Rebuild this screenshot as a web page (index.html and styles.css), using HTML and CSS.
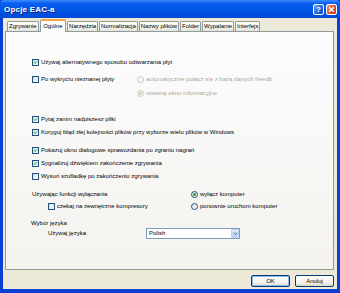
FILE: index.html
```html
<!DOCTYPE html>
<html>
<head>
  <title>Opcje EAC-a</title>
  <meta charset="UTF-8" />
  <link rel="stylesheet" href="styles.css">
</head>
<body>
  <div class="window">
    <div class="titlebar">
      <span class="title">Opcje EAC-a</span>
      <div class="caption-btns">
        <span class="cap help">?</span>
        <span class="cap close"><svg viewBox="0 0 9 9" width="7" height="7"><path d="M1.5 1.5l6 6M7.5 1.5l-6 6" stroke="#fff" stroke-width="1.7"/></svg></span>
      </div>
    </div>

    <div class="client">
      <div class="tabs">
        <span class="tab">Zgrywanie</span>
        <span class="tab active">Ogólne</span>
        <span class="tab">Narzędzia</span>
        <span class="tab">Normalizacja</span>
        <span class="tab">Nazwy plików</span>
        <span class="tab">Folder</span>
        <span class="tab">Wypalanie</span>
        <span class="tab">Interfejs</span>
      </div>

      <div class="panel">
        <div class="group">
          <div class="opt"><span class="box"><svg viewBox="0 0 7 7"><path d="M1.4 3.3l1.5 1.6 2.7-3.1"/></svg></span>Używaj alternatywnego sposobu odtwarzania płyt</div>
        </div>

        <div class="group freedb">
          <div class="split split-freedb">
            <div class="opt"><span class="box empty"></span>Po wykryciu nieznanej płyty</div>
            <div class="opt off"><span class="radio"></span>automatycznie połącz się z bazą danych freedb</div>
          </div>
          <div class="split split-freedb">
            <div></div>
            <div class="opt off"><span class="radio on"></span>otwieraj okno informacyjne</div>
          </div>
        </div>

        <div class="group files">
          <div class="opt"><span class="box"><svg viewBox="0 0 7 7"><path d="M1.4 3.3l1.5 1.6 2.7-3.1"/></svg></span>Pytaj zanim nadpiszesz pliki</div>
          <div class="opt"><span class="box"><svg viewBox="0 0 7 7"><path d="M1.4 3.3l1.5 1.6 2.7-3.1"/></svg></span>Koryguj błąd złej kolejności plików przy wyborze wielu plików w Windows</div>
        </div>

        <div class="group rip">
          <div class="opt"><span class="box"><svg viewBox="0 0 7 7"><path d="M1.4 3.3l1.5 1.6 2.7-3.1"/></svg></span>Pokazuj okno dialogowe sprawozdania po zgraniu nagrań</div>
          <div class="opt"><span class="box"><svg viewBox="0 0 7 7"><path d="M1.4 3.3l1.5 1.6 2.7-3.1"/></svg></span>Sygnalizuj dźwiękiem zakończenie zgrywania</div>
          <div class="opt"><span class="box empty"></span>Wysuń szufladkę po zakończeniu zgrywania</div>
        </div>

        <div class="group power">
          <div class="split split-power">
            <div class="opt">Używając funkcji wyłączania</div>
            <div class="opt"><span class="radio on"></span>wyłącz komputer</div>
          </div>
          <div class="split split-power">
            <div class="opt indent"><span class="box empty"></span>czekaj na zewnętrzne kompresory</div>
            <div class="opt"><span class="radio"></span>ponownie uruchom komputer</div>
          </div>
        </div>

        <div class="group lang">
          <div class="opt lang-title">Wybór języka</div>
          <div class="lang-row">
            <span class="lang-label">Używaj języka</span>
            <div class="combo">
              <span>Polish</span>
              <span class="combo-btn"><svg viewBox="0 0 7 7" width="5" height="5"><path d="M1 2.2l2.5 2.4 2.5-2.4"/></svg></span>
            </div>
          </div>
        </div>
      </div>

      <div class="actions">
        <button class="btn default">OK</button>
        <button class="btn">Anuluj</button>
      </div>
    </div>
  </div>
</body>
</html>
```

FILE: styles.css
```css
body {
  margin: 0;
  font-family: "Liberation Sans", Arial, sans-serif;
  font-size: 6px;
  color: #000;
}
.window {
  width: 340px;
  height: 293px;
  display: flex;
  flex-direction: column;
  background: #0a3fd6;
}
.titlebar {
  height: 18px;
  flex: none;
  display: flex;
  align-items: center;
  justify-content: space-between;
  padding: 0 3px 0 4px;
  background: linear-gradient(#3d8dfb, #0a5ff0 18%, #0056e6 55%, #0049d6);
  border-radius: 4px 4px 0 0;
}
.title {
  color: #fff;
  font-weight: bold;
  font-size: 8px;
  letter-spacing: 0.2px;
  text-shadow: 1px 1px 0 #0a1e8c;
}
.caption-btns {
  display: flex;
  gap: 2px;
}
.cap {
  width: 11px;
  height: 11px;
  box-sizing: border-box;
  border: 1px solid #fff;
  border-radius: 2px;
  display: flex;
  align-items: center;
  justify-content: center;
  color: #fff;
  font-weight: bold;
  font-size: 8px;
}
.help {
  background: linear-gradient(135deg, #6fa4ff, #2260e0 60%, #1a4fc8);
}
.close {
  background: linear-gradient(135deg, #f09a7d, #e0522e 55%, #c8391a);
}
.client {
  flex: 1;
  margin: 0 3px 4px;
  padding: 1px 3px 0 2px;
  background: #ece9d8;
  display: flex;
  flex-direction: column;
}
.tabs {
  height: 12px;
  flex: none;
  display: flex;
  align-items: flex-end;
  padding-left: 2px;
  position: relative;
  z-index: 1;
}
.tab {
  height: 10px;
  box-sizing: border-box;
  border: 1px solid #919b9c;
  border-bottom: none;
  border-radius: 2px 2px 0 0;
  padding: 0 1px;
  margin-right: 1px;
  line-height: 9px;
  background: linear-gradient(#ffffff, #f3f3ef 60%, #e3e1d8);
  white-space: nowrap;
}
.tab.active {
  height: 13px;
  margin-bottom: -1px;
  padding: 1px 2.5px 0;
  border-top: 2px solid #f2a640;
  background: #fcfcfe;
}
.panel {
  flex: 1;
  border: 1px solid #919b9c;
  background: linear-gradient(#fcfcfe, #f4f3ee);
  padding: 25px 0 0 26px;
  display: flex;
  flex-direction: column;
}
.group {
  display: flex;
  flex-direction: column;
}
.freedb {
  margin-top: 7px;
  gap: 4px;
}
.files {
  margin-top: 16px;
  gap: 3px;
}
.rip {
  margin-top: 8px;
  gap: 3px;
}
.power {
  margin-top: 8px;
  gap: 2px;
}
.lang {
  margin-top: 7px;
}
.opt {
  height: 10px;
  display: flex;
  align-items: center;
  white-space: nowrap;
}
.opt.off {
  color: #aca899;
}
.indent {
  padding-left: 16px;
}
.split {
  display: grid;
}
.split-freedb {
  grid-template-columns: 105px 1fr;
}
.split-power {
  grid-template-columns: 159px 1fr;
}
.box {
  width: 7px;
  height: 7px;
  box-sizing: border-box;
  flex: none;
  margin-right: 2px;
  border: 1px solid #1c5180;
  background: linear-gradient(135deg, #dcdcd7, #fbfbf9);
  display: flex;
}
.box svg {
  width: 5px;
  height: 5px;
}
.box path {
  fill: none;
  stroke: #21a121;
  stroke-width: 1.4;
}
.radio {
  width: 7px;
  height: 7px;
  box-sizing: border-box;
  flex: none;
  margin-right: 2px;
  border: 1px solid #1c5180;
  border-radius: 50%;
  background: linear-gradient(135deg, #dcdcd7, #fff);
  display: flex;
  align-items: center;
  justify-content: center;
}
.radio.on::after {
  content: "";
  width: 3px;
  height: 3px;
  border-radius: 50%;
  background: #21a121;
}
.off .radio {
  border-color: #cac8bb;
  background: #f6f5f0;
}
.off .radio.on::after {
  background: #cac8bb;
}
.lang-title {
  margin-left: -1px;
}
.lang-row {
  height: 12px;
  margin-top: -1px;
  display: flex;
  align-items: center;
}
.lang-label {
  width: 114px;
  padding-left: 16px;
  box-sizing: content-box;
  white-space: nowrap;
}
.combo {
  width: 94px;
  height: 11px;
  box-sizing: border-box;
  border: 1px solid #7f9db9;
  background: #fff;
  display: flex;
  align-items: center;
  justify-content: space-between;
  padding: 0 0 0 2px;
  margin-left: -16px;
}
.combo-btn {
  width: 8px;
  height: 9px;
  box-sizing: border-box;
  border: 1px solid #bcd0f7;
  border-radius: 1px;
  background: linear-gradient(#e4ecfd, #b8ccf7);
  display: flex;
  align-items: center;
  justify-content: center;
}
.combo-btn path {
  fill: none;
  stroke: #4d6185;
  stroke-width: 1.4;
}
.actions {
  height: 19px;
  flex: none;
  display: flex;
  justify-content: flex-end;
  gap: 5px;
  padding-top: 5px;
  box-sizing: border-box;
}
.btn {
  width: 39px;
  height: 12px;
  padding: 0;
  font-family: inherit;
  font-size: 6px;
  color: #000;
  border: 1px solid #003c74;
  border-radius: 2px;
  background: linear-gradient(#ffffff, #f3f2ec 70%, #d8d4c8);
}
.btn.default {
  box-shadow: inset 0 0 0 1px #95b6ef;
}
```
